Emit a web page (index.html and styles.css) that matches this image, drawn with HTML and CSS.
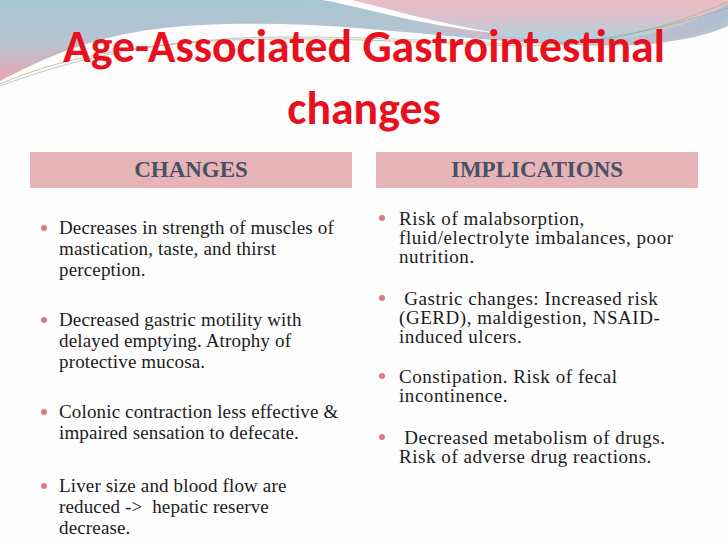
FILE: index.html
```html
<!DOCTYPE html>
<html lang="en">
<head>
<meta charset="utf-8">
<title>Age-Associated Gastrointestinal changes</title>
<link rel="stylesheet" href="styles.css">
</head>
<body>
<div class="slide">
  <svg class="deco" viewBox="0 0 728 100" width="728" height="100" aria-hidden="true">
    <defs>
      <linearGradient id="gLeft" x1="0" y1="0" x2="0.15" y2="1">
        <stop offset="0" stop-color="#a3c8d2"/>
        <stop offset="0.45" stop-color="#b8c3d0"/>
        <stop offset="0.8" stop-color="#eaa3ab"/>
        <stop offset="1" stop-color="#f0a8ae"/>
      </linearGradient>
      <linearGradient id="gRight" x1="0" y1="0" x2="0" y2="1">
        <stop offset="0" stop-color="#ebbcc4"/>
        <stop offset="0.45" stop-color="#d9c2cd"/>
        <stop offset="1" stop-color="#a6d4e2"/>
      </linearGradient>
      <linearGradient id="gBand" x1="0" y1="0" x2="1" y2="0">
        <stop offset="0" stop-color="#d9b6c2"/>
        <stop offset="0.6" stop-color="#c7bccb"/>
        <stop offset="1" stop-color="#aebfd0"/>
      </linearGradient>
    </defs>
    <rect x="0" y="0" width="728" height="100" fill="url(#gLeft)"/>
    <path d="M330,0 L728,0 L728,20 C690,40 640,47 590,47 C540,47 490,40 450,30 C410,20 365,8 330,0 Z" fill="url(#gBand)"/>
    <path d="M345,0 L728,0 L728,4 C690,26 640,40 590,42 C530,42 470,32 420,18 C395,12 370,6 345,0 Z" fill="url(#gRight)"/>
    <path d="M322,0 L352,0 C392,10 442,24 497,33 C462,30 420,22 385,14 C360,8 340,3 322,0 Z" fill="#ffffff"/>
    <path d="M0,81 C45,58 100,30 200,25 C300,20 380,30 470,38 C540,44 600,48 650,44 C690,40 715,32 728,26 L728,100 L0,100 Z" fill="#fdfdfd"/>
    <path d="M0,84 C60,58 130,45 230,40 C330,36 420,43 520,46 C600,46 660,30 728,2" fill="none" stroke="#bfae62" stroke-width="0.9" opacity="0.8"/>
    <path d="M0,86 C70,60 140,44 240,38 C340,34 430,42 530,44 C610,43 670,26 728,8" fill="none" stroke="#6fa8b2" stroke-width="0.8" opacity="0.7"/>
  </svg>

  <h1 class="title">Age-Associated Gastrointestinal<br>changes</h1>

  <div class="columns">
    <section class="col col-changes">
      <div class="col-head">CHANGES</div>
      <ul class="points">
        <li>Decreases in strength of muscles of<br>mastication, taste, and thirst<br>perception.</li>
        <li>Decreased gastric motility with<br>delayed emptying. Atrophy of<br>protective mucosa.</li>
        <li>Colonic contraction less effective &amp;<br>impaired sensation to defecate.</li>
        <li>Liver size and blood flow are<br>reduced -&gt;&nbsp; hepatic reserve<br>decrease.</li>
      </ul>
    </section>
    <section class="col col-implications">
      <div class="col-head">IMPLICATIONS</div>
      <ul class="points points-tight">
        <li>Risk of malabsorption,<br>fluid/electrolyte imbalances, poor<br>nutrition.</li>
        <li>&nbsp;Gastric changes: Increased risk<br>(GERD), maldigestion, NSAID-<br>induced ulcers.</li>
        <li>Constipation. Risk of fecal<br>incontinence.</li>
        <li>&nbsp;Decreased metabolism of drugs.<br>Risk of adverse drug reactions.</li>
      </ul>
    </section>
  </div>
</div>
</body>
</html>
```

FILE: styles.css
```css
html, body {
  margin: 0;
  padding: 0;
}

body {
  width: 728px;
  height: 546px;
  overflow: hidden;
  background: #fdfdfd;
}

.slide {
  position: relative;
  width: 728px;
  height: 546px;
  overflow: hidden;
  background: #fdfdfd;
}

.deco {
  position: absolute;
  left: 0;
  top: 0;
  display: block;
}

.title {
  position: relative;
  margin: 0;
  padding-top: 15px;
  height: 134px;
  box-sizing: border-box;
  text-align: center;
  font-family: Carlito, "Liberation Sans Narrow", Lato, sans-serif;
  font-weight: 700;
  font-size: 45.8px;
  line-height: 62px;
  color: #e8101c;
}

.columns {
  position: relative;
  display: grid;
  grid-template-columns: 322px 322px;
  column-gap: 24px;
  padding: 18px 30px 0 30px;
}

.col-head {
  height: 36px;
  background: #e6b3b6;
  color: #4a5065;
  font-family: "Liberation Serif", serif;
  font-weight: 700;
  font-size: 23px;
  line-height: 36px;
  text-align: center;
}

.points {
  list-style: none;
  margin: 0;
  padding: 0;
  font-family: "Liberation Serif", serif;
  font-size: 19px;
  letter-spacing: 0.25px;
  color: #1c1c1c;
  white-space: nowrap;
}

.points li {
  position: relative;
  padding-left: 29px;
}

.points li::before {
  content: "";
  position: absolute;
  left: 11px;
  width: 6px;
  height: 6px;
  border-radius: 50%;
  background: #dd7886;
}

.col-changes .points {
  padding-top: 29px;
  line-height: 21px;
  letter-spacing: 0.15px;
}

.col-changes .points li {
  margin-bottom: 29px;
}

.col-changes .points li:nth-child(3) {
  margin-bottom: 32px;
}

.col-changes .points li::before {
  top: 8px;
}

.col-implications .points {
  padding-top: 21px;
  line-height: 19px;
  letter-spacing: 0.55px;
}

.col-implications .points li {
  padding-left: 23px;
  margin-bottom: 23px;
}

.col-implications .points li:nth-child(2) {
  margin-bottom: 21px;
}

.col-implications .points li::before {
  left: 3px;
  top: 6px;
}
```
